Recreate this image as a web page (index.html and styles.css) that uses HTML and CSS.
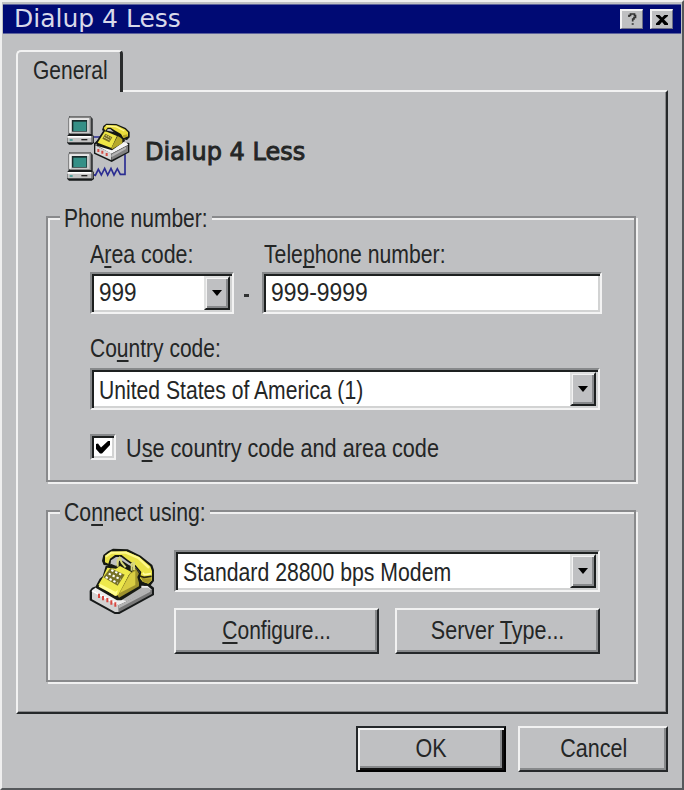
FILE: index.html
```html
<!DOCTYPE html>
<html lang="en">
<head>
<meta charset="utf-8">
<title>Dialup 4 Less</title>
<link rel="stylesheet" href="styles.css">
</head>
<body>
<main class="window">
  <header class="titlebar">
    <span class="caption">Dialup 4 Less</span>
    <span class="tool"><svg width="20" height="17" viewBox="0 0 20 17"><path d="M7 6V4.500H8.500V3H12.500V4.500H13.500V6.500H12V8H10.700V10.500M9.700 13H11.700" fill="none" stroke="#333" stroke-width="1.700"/></svg></span>
    <span class="tool"><svg width="20" height="17" viewBox="0 0 20 17"><path d="M4 4H7.500L10 6.500L12.500 4H16V5L12 8.500L16 12.500V14H12.500L10 11L7.500 14H4V12.500L8 8.500L4 5Z" fill="#000"/></svg></span>
  </header>

  <div class="tab"><span class="t t-general">General</span></div>

  <section class="panel">
    <div class="intro">
      <svg width="90" height="84" viewBox="0 0 270 252">
        <path d="M110 93H136M110 205L118 208L127 190L136 207L146 187L155 207L165 187L174 207L184 188L193 205H207V145" fill="none" stroke="#2b2d92" stroke-width="5"/>
        <g id="pc">
          <path d="M40 31H103L110 38V87L114 91V111L107 116H39L33 110V91L38 85V37Z" fill="#171a1b"/>
          <path d="M38 36L43 31H101L106 36V84H42L36 79Z" fill="#858585"/>
          <path d="M40 37H101V81H40Z" fill="#c8c8c8"/>
          <path d="M40 37H99V41H45V80H40Z" fill="#f2f2f2"/>
          <path d="M48 42H93V77H48Z" fill="#172b2b"/>
          <path d="M52 47H91V75H52Z" fill="#359087"/>
          <path d="M34 91H107V109H34Z" fill="#c4c4c4"/>
          <path d="M34 90H106V95H34Z" fill="#fff"/>
          <path d="M41 100H50V104H41Z" fill="#24928b"/>
          <path d="M76 99H94V103H76Z" fill="#222"/>
          <path d="M107 91L112 87V108L107 112Z" fill="#777"/>
        </g>
        <use href="#pc" y="108"/>
        <path d="M114 112L132 97L220 111V139L167 168L114 143Z" fill="#151817"/>
        <path d="M118 116L134 103L211 109L217 116L166 143Z" fill="#f5f5f5"/>
        <path d="M118 118L165 142V162L118 140Z" fill="#d7d7d7"/>
        <path d="M166 143L216 118V137L166 163Z" fill="#818181"/>
        <path d="M166 146L210 122V129L166 154Z" fill="#b5b5b5"/>
        <path d="M127 129V138M139 134V143M152 141V150" stroke="#d44c43" stroke-width="6"/>
        <path d="M120 108L143 72L177 79L199 78L207 105L168 133L122 119Z" fill="#151814"/>
        <path d="M125 110L147 75L183 90L166 126Z" fill="#eee646"/>
        <path d="M166 126L185 90L199 98V112L168 130Z" fill="#b6a929"/>
        <path d="M148 83L169 94L160 109L139 98Z" fill="#777023"/>
        <path d="M149 88L164 96M145 94L160 102" stroke="#fff1a0" stroke-width="3" stroke-dasharray="4 3"/>
        <path d="M138 73L142 60L151 53L181 54L209 66L221 78V94L213 102L198 99L190 86L174 79L163 69H155L151 77Z" fill="#151812"/>
        <path d="M143 66L151 57L181 58L207 70L216 79V91L202 96L195 84L178 74L164 65H155L148 74Z" fill="#e9dc3c"/>
        <path d="M151 60L180 62L205 75" fill="none" stroke="#fff791" stroke-width="4"/>
        <path d="M201 88L214 85V92L201 96Z" fill="#b8a725"/>
      </svg>
      <h1 class="heading">Dialup 4 Less</h1>
    </div>

    <section class="group phone">
      <h2 class="legend"><span class="t t-phone">Phone number:</span></h2>
      <div class="numbers">
        <label class="lab"><span class="t t-area">A<u>r</u>ea code:</span></label>
        <span></span>
        <label class="lab tel"><span class="t t-tel">Tele<u>p</u>hone number:</span></label>
        <div class="field"><span class="t t-nine">999</span><span class="drop"><i></i></span></div>
        <span class="dash"></span>
        <div class="field plain"><span class="t t-nines">999-9999</span></div>
      </div>
      <label class="lab country"><span class="t t-country">Co<u>u</u>ntry code:</span></label>
      <div class="field wide"><span class="t t-usa">United States of America (1)</span><span class="drop"><i></i></span></div>
      <div class="check">
        <span class="box"><svg width="18" height="18" viewBox="0 0 18 18"><path d="M2 6L4 5.500L7 9.500L14 3H16V7L8 15.500H6L2 11Z" fill="#000"/></svg></span>
        <span class="t t-use">U<u>s</u>e country code and area code</span>
      </div>
    </section>

    <section class="group modem">
      <h2 class="legend"><span class="t t-connect">Co<u>n</u>nect using:</span></h2>
      <div class="device">
        <svg width="90" height="84" viewBox="0 0 270 252">
          <path d="M29 152L36 143L48 139L64 130H205L222 143V165L118 222H104L29 181Z" fill="#171a1a"/>
          <path d="M36 151L54 138L202 137L216 149L116 196Z" fill="#ededed"/>
          <path d="M122 178L184 143H205L214 149L140 184Z" fill="#b3b3b3"/>
          <path d="M36 153L116 194V216H105L36 178Z" fill="#d2d2d2"/>
          <path d="M117 196L216 148V162L117 216Z" fill="#777"/>
          <path d="M117 195L211 149V155L117 205Z" fill="#b3b3b3"/>
          <path d="M36 152L112 193" stroke="#fff" stroke-width="5"/>
          <path d="M57 161V174M69 168V181M82 174V187M94 181V194M106 187V200" stroke="#d84840" stroke-width="6"/>
          <path d="M48 137L59 116L68 109L77 78L94 72L109 78L118 62H127L145 74L170 86L184 104V143L124 181H111L48 144Z" fill="#171a12"/>
          <path d="M55 135L69 111L82 83L108 86L120 78L154 96L146 106L116 165L105 168Z" fill="#eee94c"/>
          <path d="M113 167L149 101L167 85L177 101V139L117 173Z" fill="#9e922d"/>
          <path d="M119 159L151 101L166 93V135Z" fill="#d9cd42"/>
          <path d="M61 132L106 155L114 150L109 168L56 140Z" fill="#fffd92"/>
          <path d="M91 84L134 104L113 137L70 112Z" fill="#777127"/>
          <path d="M94 90L128 106M86 101L122 118M77 111L113 129" stroke="#fff" stroke-width="6" stroke-dasharray="7 6"/>
          <path d="M71 75L66 63L70 45L84 34L99 26L143 28L182 47L217 75L222 90V123L211 137H193L177 128L172 111L179 97L163 79L143 65L124 51L108 51L93 61L91 77Z" fill="#151812"/>
          <path d="M75 67V49L94 35L139 34L178 51L211 79L216 93V121L205 131L188 125L180 115L184 96L167 76L143 59L125 45H105L90 56L85 71Z" fill="#e9e247"/>
          <path d="M77 50L94 38L138 38L175 54L207 84" fill="none" stroke="#fff98b" stroke-width="7"/>
          <path d="M181 109L191 115H215V121L204 130L189 125Z" fill="#a5962a"/>
          <path d="M189 98L193 104L213 101" fill="none" stroke="#fffca0" stroke-width="5"/>
          <path d="M180 108L192 112L215 109" fill="none" stroke="#29260f" stroke-width="5"/>
          <path d="M113 80V60L119 53L125 68L137 82M155 92V72L162 69V90" fill="none" stroke="#d8d77a" stroke-width="6"/>
        </svg>
        <div class="controls">
          <div class="field"><span class="t t-modem">Standard 28800 bps Modem</span><span class="drop"><i></i></span></div>
          <div class="pair">
            <button class="btn"><span class="t t-conf"><u>C</u>onfigure...</span></button>
            <button class="btn"><span class="t t-server">Server <u>T</u>ype...</span></button>
          </div>
        </div>
      </div>
    </section>
  </section>

  <footer class="actions">
    <button class="btn default"><span class="t t-ok">OK</span></button>
    <button class="btn"><span class="t t-cancel">Cancel</span></button>
  </footer>
</main>
</body>
</html>
```
FILE: styles.css
```css
* { box-sizing: border-box; }

body {
  margin: 0;
  background: #bfc0c2;
  color: #242626;
  font: 25px/28px "Liberation Sans", sans-serif;
}

.window {
  width: 684px;
  height: 790px;
  overflow: hidden;
  background: #bfc0c2;
  border: 2px solid;
  border-color: #efefef #55585b #55585b #efefef;
  padding: 2px 1px 0;
}

.titlebar {
  height: 30px;
  display: flex;
  align-items: center;
  padding: 0 8px 0 11px;
  background: #000a74;
  border-top: 1px solid #5c629c;
  border-bottom: 1px solid #5c629c;
}
.caption {
  flex: 1;
  color: #d8d9ea;
  font: 25px/28px "DejaVu Sans", sans-serif;
  white-space: nowrap;
}
.tool {
  width: 23px;
  height: 20px;
  margin: -1px 0 0 7px;
  background: #bfc0c2;
  border: 2px solid;
  border-color: #f2f2f2 #6e6f86 #6e6f86 #f2f2f2;
  border-right-width: 1px;
  border-bottom-width: 1px;
}
.tool svg { display: block; }

/* Narrow lettering: each text run keeps its own horizontal scale. */
.t {
  display: inline-block;
  white-space: nowrap;
  transform: scaleX(var(--sx, .86));
  transform-origin: left center;
}
u {
  text-decoration: underline;
  text-decoration-thickness: 2px;
  text-underline-offset: 3px;
  text-decoration-skip-ink: none;
}
.t-general { --sx: .84; }
.t-phone { --sx: .84; }
.t-area { --sx: .855; }
.t-tel { --sx: .848; }
.t-nine { --sx: .9; }
.t-nines { --sx: .915; }
.t-country { --sx: .84; }
.t-usa { --sx: .845; }
.t-use { --sx: .866; }
.t-connect { --sx: .85; }
.t-modem { --sx: .85; }
.t-conf { --sx: .84; }
.t-cancel { --sx: .86; }

.tab {
  position: relative;
  z-index: 1;
  width: 107px;
  height: 42px;
  margin: 16px 0 -2px 13px;
  padding: 4px 0 0 15px;
  background: #bfc0c2;
  border-top: 2px solid #f2f2f2;
  border-left: 2px solid #f2f2f2;
  border-right: 3px solid #292b2c;
  border-radius: 5px 4px 0 0;
}

.panel {
  width: 652px;
  height: 624px;
  margin-left: 13px;
  border: 2px solid;
  border-color: #f2f2f2 #25282a #25282a #f2f2f2;
  box-shadow: inset -1px -1px #898a8c;
  padding: 14px 0 0 28px;
}

.intro {
  display: flex;
  height: 110px;
  padding-left: 10px;
}
.heading {
  margin: 32px 0 0 -1px;
  font: 24px/28px "DejaVu Sans", sans-serif;
  -webkit-text-stroke: .9px #242626;
  white-space: nowrap;
}

.group {
  width: 590px;
  border: 2px solid #898a8c;
  box-shadow: 2px 2px #f0f0f0, inset 2px 2px #f0f0f0;
  padding: 0 0 0 42px;
}
.phone { height: 266px; }
.modem { height: 172px; margin-top: 28px; }

.legend {
  width: 152px;
  height: 28px;
  margin: -14px 0 0 -30px;
  padding-left: 4px;
  background: #bfc0c2;
  font: inherit;
}
.modem .legend { width: 150px; }

.numbers {
  display: grid;
  grid-template: 32px 42px / 144px 28px 340px;
  margin-top: 8px;
}
.lab { display: block; height: 28px; }
.tel { padding-left: 2px; }

.field {
  height: 42px;
  display: flex;
  justify-content: space-between;
  background: #fff;
  border: 2px solid;
  border-color: #87898b #f3f3f3 #f3f3f3 #87898b;
  box-shadow: inset 2px 2px #1d2020, inset -2px -2px #d2d3d3;
  padding: 2px;
}
.field .t { width: 0; margin: 2px 0 0 5px; }
.wide .t, .controls .t-modem { margin-top: 4px; }
.drop {
  width: 26px;
  height: 34px;
  display: grid;
  place-items: center;
  background: #bfc0c2;
  border: 2px solid;
  border-color: #dfe0e0 #1d2020 #1d2020 #dfe0e0;
  box-shadow: inset 1px 1px #f3f3f3, inset -2px -2px #87898b;
}
.drop i {
  border: 5px solid transparent;
  border-top: 6px solid #000;
  border-bottom: 0;
}
.dash {
  width: 5px;
  height: 3px;
  margin: 22px 0 0 10px;
  background: #303232;
}
.country { margin: 20px 0 6px; }
.wide { width: 510px; }

.check { display: flex; margin-top: 24px; }
.box {
  width: 26px;
  height: 26px;
  margin-right: 10px;
  padding: 2px;
  background: #fff;
  border: 2px solid;
  border-color: #87898b #f3f3f3 #f3f3f3 #87898b;
  box-shadow: inset 2px 2px #1d2020, inset -2px -2px #d2d3d3;
}
.box svg { display: block; }

.device { display: flex; margin: 14px 0 0 -10px; }
.device > svg { flex: none; }
.controls { margin: 10px 0 0 4px; width: 426px; }
.pair { display: flex; justify-content: space-between; margin-top: 16px; }

.btn {
  width: 205px;
  height: 46px;
  padding: 0 0 3px;
  background: #bfc0c2;
  color: inherit;
  font: inherit;
  border: 2px solid;
  border-color: #f2f2f2 #25282a #25282a #f2f2f2;
  box-shadow: inset -2px -2px #87898b;
}
.btn .t { transform-origin: center; }

.actions {
  display: flex;
  gap: 12px;
  margin: 12px 0 0 353px;
}
.actions .btn { width: 150px; }
.actions .t-cancel { padding-left: 2px; }
.actions .default {
  border-color: #25282a #000 #000 #25282a;
  box-shadow: inset 2px 2px #f2f2f2, inset -2px -2px #111, inset -4px -4px #87898b;
}
```
